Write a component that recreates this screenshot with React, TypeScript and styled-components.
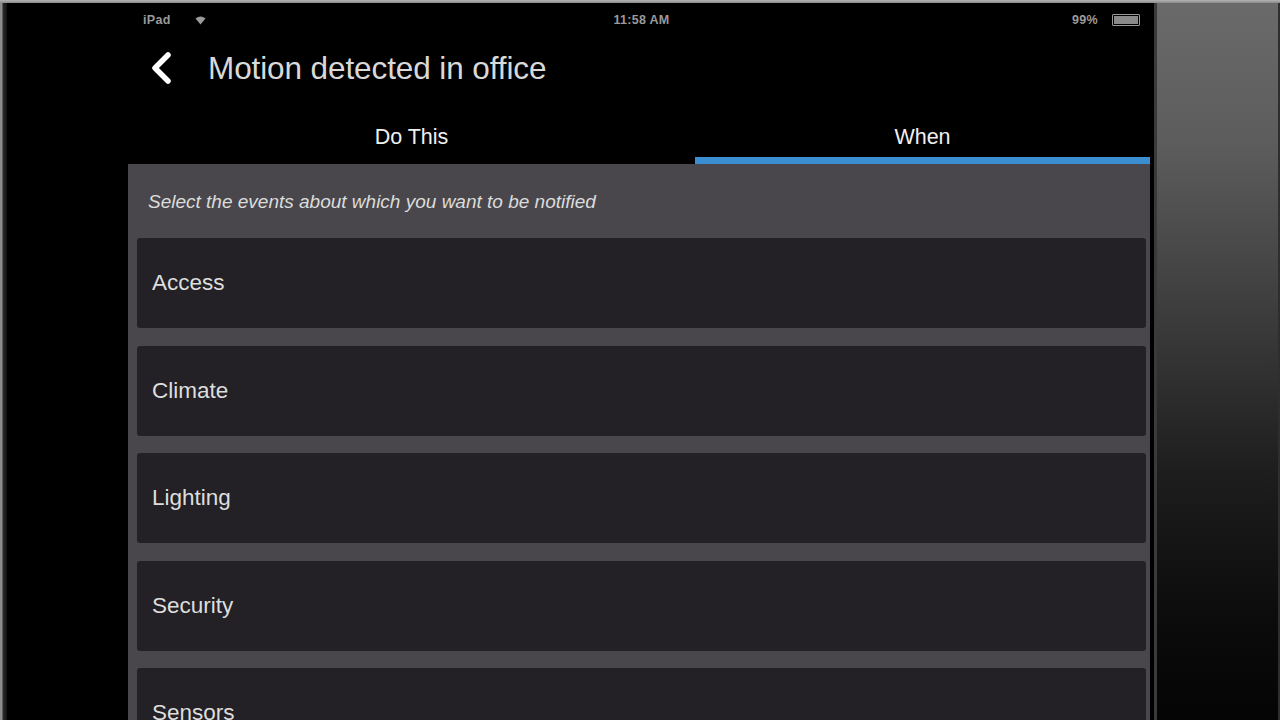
import styled, { createGlobalStyle } from 'styled-components'

const GlobalStyle = createGlobalStyle`
  html, body {
    margin: 0;
    padding: 0;
    height: 100%;
    background: #000;
    overflow: hidden;
  }
  body {
    font-family: "Liberation Sans", Arial, sans-serif;
  }
`

const Page = styled.div`
  height: 720px;
  display: flex;
  flex-direction: column;
  background: #000;
`

const TopEdge = styled.div`
  height: 3px;
  background: linear-gradient(#b4b4b4, #8a8a8a);
  flex: none;
`

const Frame = styled.div`
  flex: 1;
  display: flex;
  min-height: 0;
`

const LeftBezel = styled.div`
  width: 7px;
  flex: none;
  background: linear-gradient(90deg, #8c8c8c 0, #8c8c8c 2px, #2a2a2a 3px, #111 7px);
`

const Screen = styled.div`
  width: 1145px;
  flex: none;
  padding-left: 121px;
  box-sizing: border-box;
  display: flex;
  min-height: 0;
`

const Column = styled.div`
  width: 1022px;
  display: flex;
  flex-direction: column;
  min-height: 0;
`

const StatusBar = styled.div`
  height: 33px;
  display: grid;
  grid-template-columns: 1fr auto 1fr;
  align-items: center;
  padding: 0 10px 0 15px;
  color: #9a9a9a;
  font-size: 12.5px;
  font-weight: bold;
  letter-spacing: 0.3px;
`

const StatusLeft = styled.div`
  display: flex;
  align-items: center;
  gap: 24px;
`

const StatusRight = styled.div`
  display: flex;
  align-items: center;
  justify-content: flex-end;
  gap: 14px;
`

const Battery = styled.div`
  width: 24px;
  height: 8px;
  border: 1.5px solid #9a9a9a;
  border-radius: 1px;
  padding: 1px;
  display: flex;
  &::before {
    content: '';
    flex: 1;
    background: #8a8a8a;
  }
`

const Header = styled.div`
  height: 64px;
  display: flex;
  align-items: center;
  padding-left: 21px;
  gap: 35px;
`

const Title = styled.h1`
  margin: 0;
  font-size: 31.5px;
  font-weight: normal;
  color: #d9d9d9;
  letter-spacing: -0.1px;
`

const Tabs = styled.div`
  height: 64px;
  display: grid;
  grid-template-columns: 567px 1fr;
`

const Tab = styled.div<{ $active?: boolean }>`
  display: flex;
  align-items: flex-end;
  justify-content: center;
  padding-bottom: 8px;
  font-size: 21.5px;
  color: #f0f0f0;
  box-sizing: border-box;
  border-bottom: 7px solid ${p => (p.$active ? '#3b8fd0' : 'transparent')};
  line-height: 24px;
`

const Panel = styled.div`
  flex: 1;
  min-height: 0;
  overflow: hidden;
  background: #49474b;
  padding: 0 4px 0 9px;
`

const Hint = styled.p`
  margin: 0;
  height: 74px;
  display: flex;
  align-items: center;
  padding-left: 11px;
  padding-top: 1px;
  box-sizing: border-box;
  font-size: 19px;
  font-style: italic;
  color: #dcdcdc;
`

const List = styled.div`
  display: flex;
  flex-direction: column;
  gap: 17.5px;
`

const Card = styled.div`
  height: 90px;
  flex: none;
  background: #232125;
  border-radius: 3px;
  display: flex;
  align-items: center;
  padding-left: 15px;
  font-size: 22.5px;
  color: #dedede;
`

const RightBezel = styled.div`
  flex: 1;
  display: flex;
  background: #000;
  padding-left: 2px;
`

const SidePanel = styled.div`
  flex: 1;
  border-left: 3px solid #3a3a3a;
  border-right: 2px solid #2e2e2e;
  background: linear-gradient(#6a6a6a 0%, #5c5c5c 20%, #3a3a3a 45%, #1e1e1e 65%, #0c0c0c 85%, #040404 100%);
`

function Wifi() {
  return (
    <svg width="11" height="10" viewBox="0 0 11 10">
      <path d="M5.5 9.5 L0.5 3.5 Q5.5 -0.5 10.5 3.5 Z" fill="#9a9a9a" />
    </svg>
  )
}

function BackChevron() {
  return (
    <svg width="24" height="32" viewBox="0 0 24 32">
      <path d="M19 3 L6 16 L19 29" fill="none" stroke="#fff" strokeWidth="5.5" strokeLinecap="round" strokeLinejoin="round" />
    </svg>
  )
}

const categories = ['Access', 'Climate', 'Lighting', 'Security', 'Sensors']

export default function App() {
  return (
    <Page>
      <GlobalStyle />
      <TopEdge />
      <Frame>
        <LeftBezel />
        <Screen>
          <Column>
            <StatusBar>
              <StatusLeft>
                <span>iPad</span>
                <Wifi />
              </StatusLeft>
              <span>11:58 AM</span>
              <StatusRight>
                <span>99%</span>
                <Battery />
              </StatusRight>
            </StatusBar>
            <Header>
              <BackChevron />
              <Title>Motion detected in office</Title>
            </Header>
            <Tabs>
              <Tab>Do This</Tab>
              <Tab $active>When</Tab>
            </Tabs>
            <Panel>
              <Hint>Select the events about which you want to be notified</Hint>
              <List>
                {categories.map(c => (
                  <Card key={c}>{c}</Card>
                ))}
              </List>
            </Panel>
          </Column>
        </Screen>
        <RightBezel>
          <SidePanel />
        </RightBezel>
      </Frame>
    </Page>
  )
}
